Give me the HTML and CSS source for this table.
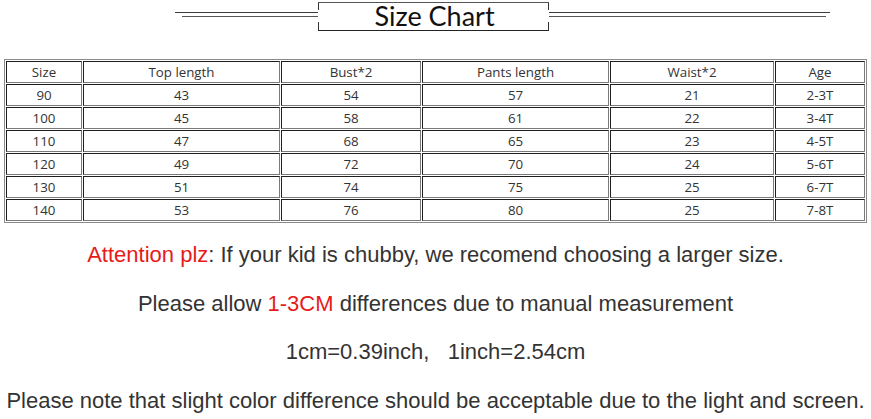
FILE: index.html
```html
<!DOCTYPE html>
<html>
<head>
<meta charset="utf-8">
<link rel="stylesheet" href="styles.css">
</head>
<body>
<div class="header">
  <div class="rules rules-left">
    <div class="rule rule-top"></div>
    <div class="rule rule-bottom"></div>
  </div>
  <div class="title-box"><span class="title">Size Chart</span></div>
  <div class="rules rules-right">
    <div class="rule rule-top"></div>
    <div class="rule rule-bottom"></div>
  </div>
</div>

<table class="chart">
  <tr><td class="c1">Size</td><td class="c2">Top length</td><td class="c3">Bust*2</td><td class="c4">Pants length</td><td class="c5">Waist*2</td><td class="c6">Age</td></tr>
  <tr><td>90</td><td>43</td><td>54</td><td>57</td><td>21</td><td>2-3T</td></tr>
  <tr><td>100</td><td>45</td><td>58</td><td>61</td><td>22</td><td>3-4T</td></tr>
  <tr><td>110</td><td>47</td><td>68</td><td>65</td><td>23</td><td>4-5T</td></tr>
  <tr><td>120</td><td>49</td><td>72</td><td>70</td><td>24</td><td>5-6T</td></tr>
  <tr><td>130</td><td>51</td><td>74</td><td>75</td><td>25</td><td>6-7T</td></tr>
  <tr><td>140</td><td>53</td><td>76</td><td>80</td><td>25</td><td>7-8T</td></tr>
</table>

<div class="notes">
  <p class="note"><span class="red">Attention plz</span>: If your kid is chubby, we recomend choosing a larger size.</p>
  <p class="note">Please allow <span class="red">1-3CM</span> differences due to manual measurement</p>
  <p class="note">1cm=0.39inch,&nbsp;&nbsp;&nbsp;1inch=2.54cm</p>
  <p class="note">Please note that slight color difference should be acceptable due to the light and screen.</p>
</div>
</body>
</html>
```

FILE: styles.css
```css
html, body {
  margin: 0;
  padding: 0;
  background: #ffffff;
}

.header {
  display: flex;
  align-items: flex-start;
  padding-top: 2px;
  height: 29px;
}

.rules {
  display: flex;
  flex-direction: column;
  padding-top: 10px;
}

.rules-left {
  width: 143px;
  margin-left: 175px;
  align-items: flex-end;
}

.rules-right {
  width: 281px;
  align-items: flex-start;
}

.rule {
  height: 1px;
  background: #3c3c3c;
}

.rule-top {
  width: 100%;
  margin-bottom: 3px;
}

.rules-left .rule-bottom {
  width: 136px;
  background: #555;
}

.rules-right .rule-bottom {
  width: 277px;
  background: #555;
}

.title-box {
  box-sizing: border-box;
  width: 231px;
  height: 29px;
  border-top: 1px solid #555;
  border-bottom: 1px solid #222;
  background:
    linear-gradient(#333, #333) left top / 1px 7px no-repeat,
    linear-gradient(#333, #333) right top / 1px 7px no-repeat,
    linear-gradient(#333, #333) left bottom / 1px 8px no-repeat,
    linear-gradient(#333, #333) right bottom / 1px 8px no-repeat;
  display: flex;
  justify-content: center;
  align-items: center;
}

.title {
  font-family: Lato, "Open Sans", sans-serif;
  font-size: 27px;
  color: #111;
  line-height: 27px;
  padding-left: 2px;
  margin-top: -2px;
}

.chart {
  margin: 28px 0 0 4px;
  width: 863px;
  border: 1px solid #8a8a8a;
  border-collapse: separate;
  border-spacing: 1px;
  table-layout: fixed;
  font-family: "Open Sans", "Noto Sans", sans-serif;
  font-size: 13.3px;
  color: #333;
}

.chart td {
  box-sizing: border-box;
  height: 22px;
  padding: 0;
  text-align: center;
  vertical-align: middle;
  border: 1px solid;
  border-color: #1e1e1e #7a7a7a #7a7a7a #1e1e1e;
  line-height: 18px;
}

.c1 { width: 76px; }
.c2 { width: 197px; }
.c3 { width: 140px; }
.c4 { width: 187px; }
.c5 { width: 164px; }
.c6 { width: 90px; }

.notes {
  margin-top: 8px;
}

.note {
  margin: 0;
  text-align: center;
  font-family: "Liberation Sans", Arial, sans-serif;
  font-size: 22px;
  line-height: 48.7px;
  color: #333;
  white-space: nowrap;
}

.red {
  color: #e81a1a;
}
```
